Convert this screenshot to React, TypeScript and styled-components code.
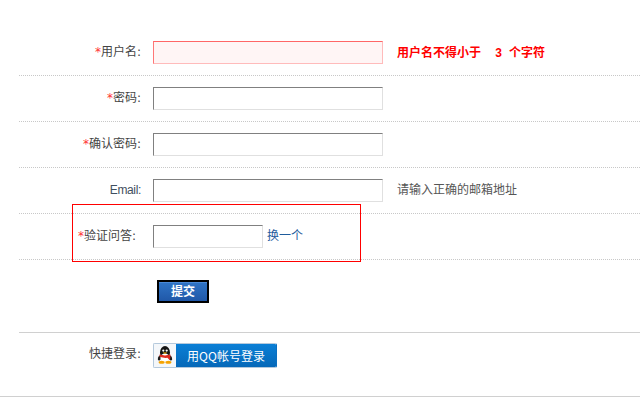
import React from 'react';
import styled, { createGlobalStyle } from 'styled-components';

const Global = createGlobalStyle`
  html, body { margin: 0; padding: 0; background: #fff; }
  body { font: 12px/16px "DejaVu Sans", "Noto Sans CJK SC", sans-serif; color: #444; overflow: hidden; }
`;

const Page = styled.div`
  position: relative;
  width: 640px;
  height: 401px;
  overflow: hidden;
  padding-top: 30px;
  box-sizing: border-box;
`;

const Form = styled.form`
  margin: 0 0 0 19px;
`;

const Row = styled.div`
  display: flex;
  align-items: center;
  height: 45px;
  border-bottom: 1px dotted #c8c8c8;
`;

const Label = styled.label<{ $w?: number }>`
  width: ${(p) => p.$w ?? 122}px;
  padding-bottom: 2px;
  text-align: right;
  flex: none;
  color: #444;
`;

const LatinLabel = styled(Label)`
  font-family: "Liberation Sans", sans-serif;
  letter-spacing: -0.35px;
  color: #3f4f60;
`;

const Star = styled.span`
  color: #f33;
`;

const Field = styled.div<{ $ml?: number }>`
  margin-left: ${(p) => p.$ml ?? 12}px;
  flex: none;
  display: flex;
  align-items: center;
`;

const Input = styled.input<{ $invalid?: boolean; $w: number }>`
  display: block;
  box-sizing: border-box;
  width: ${(p) => p.$w}px;
  height: 23px;
  padding: 0 4px;
  margin: 0;
  outline: none;
  border: 1px solid;
  border-color: ${(p) =>
    p.$invalid ? '#f66 #fbb #fbb #f77' : '#808080 #e0e0e0 #e0e0e0 #808080'};
  background: ${(p) => (p.$invalid ? '#fff5f5' : '#fff')};
`;

const Error = styled.span`
  margin-left: 14px;
  color: #f00;
  font: bold 12px/16px "Liberation Sans", "Noto Sans CJK SC", sans-serif;
  white-space: pre;
  word-spacing: 3.8px;
`;

const Hint = styled.span`
  margin-left: 14px;
  padding-bottom: 2px;
  color: #555;
`;

const SwapLink = styled.a`
  margin-left: 4px;
  padding-bottom: 2px;
  color: #1f5c9c;
  text-decoration: none;
`;

const SubmitRow = styled.div`
  height: 73px;
  box-sizing: border-box;
  padding: 20px 0 0 138px;
  border-bottom: 1px solid #d0d0d0;
`;

const Submit = styled.button`
  display: block;
  box-sizing: border-box;
  width: 52px;
  height: 23px;
  padding: 0 0 1px;
  border: 2px solid #000;
  box-shadow: inset 0 1px 0 #4a8ad8;
  background: linear-gradient(#2f74c6, #2058a8);
  color: #fff;
  font: bold 12px/16px "Noto Sans CJK SC", sans-serif;
`;

const QuickRow = styled.div`
  display: flex;
  align-items: center;
  height: 44px;
`;

const QQButton = styled.a`
  display: flex;
  width: 124px;
  height: 25px;
  box-sizing: border-box;
  border-radius: 2px;
  overflow: hidden;
  border: 1px solid #b5c9dc;
  border-right-color: #0a6fc0;
  text-decoration: none;
`;

const QQIcon = styled.span`
  width: 22px;
  flex: none;
  background: #f4f7fa;
  display: flex;
  align-items: center;
  justify-content: center;
`;

const QQText = styled.span`
  flex: 1;
  background: linear-gradient(#0a7fd6, #0668b8);
  color: #fff;
  text-align: center;
  line-height: 23px;
  white-space: nowrap;
  font-family: "Noto Sans CJK SC", sans-serif;
`;

const Footer = styled.div`
  position: absolute;
  left: 0;
  right: 0;
  top: 396px;
  border-top: 1px solid #d0d0d0;
`;

const Highlight = styled.div`
  position: absolute;
  left: 72px;
  top: 204px;
  width: 287px;
  height: 56px;
  border: 1px solid #f00;
`;

const Penguin = () => (
  <svg width="16" height="18" viewBox="0 0 16 18">
    <ellipse cx="2.6" cy="12" rx="1.6" ry="2.6" fill="#1a1a1a" transform="rotate(20 2.6 12)" />
    <ellipse cx="13.4" cy="12" rx="1.6" ry="2.6" fill="#1a1a1a" transform="rotate(-20 13.4 12)" />
    <ellipse cx="8" cy="6.5" rx="5" ry="6.5" fill="#141414" />
    <ellipse cx="8" cy="12" rx="4.6" ry="4.6" fill="#fff" />
    <circle cx="6.3" cy="4.6" r="1.1" fill="#fff" />
    <circle cx="9.7" cy="4.6" r="1.1" fill="#fff" />
    <path d="M5.6 6.4h4.8l-2.4 1.7z" fill="#f5b400" />
    <path d="M2.6 8.6q5.4 1.6 10.8 0v2.2l-.6 3.4-2.4-2.4q-4 .4-7.8-1z" fill="#e0281c" />
    <ellipse cx="4.6" cy="16.3" rx="3" ry="1.5" fill="#f5a300" />
    <ellipse cx="11.4" cy="16.3" rx="3" ry="1.5" fill="#f5a300" />
  </svg>
);

export default function App() {
  return (
    <Page>
      <Global />
      <Form onSubmit={(e) => e.preventDefault()}>
        <Row>
          <Label><Star>*</Star>用户名:</Label>
          <Field><Input $invalid $w={230} /></Field>
          <Error>{'用户名不得小于  3 个字符'}</Error>
        </Row>
        <Row>
          <Label><Star>*</Star>密码:</Label>
          <Field><Input type="password" $w={230} /></Field>
        </Row>
        <Row>
          <Label><Star>*</Star>确认密码:</Label>
          <Field><Input type="password" $w={230} /></Field>
        </Row>
        <Row>
          <LatinLabel>Email:</LatinLabel>
          <Field><Input $w={230} /></Field>
          <Hint>请输入正确的邮箱地址</Hint>
        </Row>
        <Row>
          <Label $w={117}><Star>*</Star>验证问答:</Label>
          <Field $ml={17}><Input $w={110} /><SwapLink href="#">换一个</SwapLink></Field>
        </Row>
        <SubmitRow><Submit type="submit">提交</Submit></SubmitRow>
        <QuickRow>
          <Label>快捷登录:</Label>
          <Field>
            <QQButton href="#">
              <QQIcon><Penguin /></QQIcon>
              <QQText>用QQ帐号登录</QQText>
            </QQButton>
          </Field>
        </QuickRow>
      </Form>
      <Footer />
      <Highlight />
    </Page>
  );
}
